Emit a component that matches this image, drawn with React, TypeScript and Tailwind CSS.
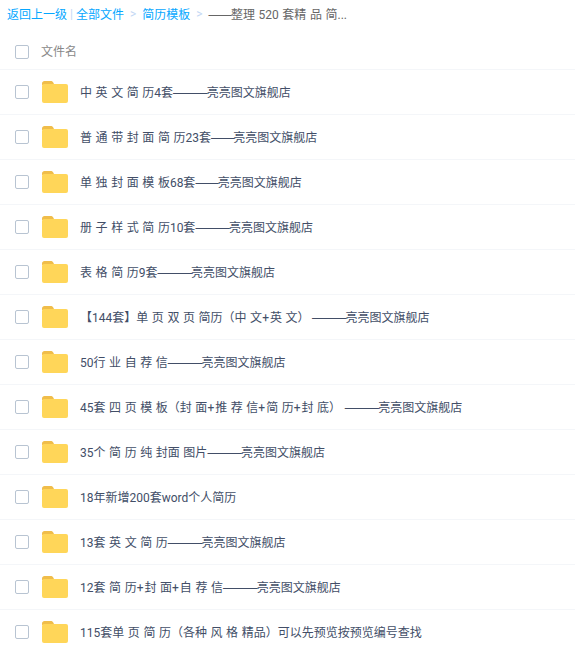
const rows = [
  "中 英 文 简 历4套———亮亮图文旗舰店",
  "普 通 带 封 面 简 历23套——亮亮图文旗舰店",
  "单 独 封 面 模 板68套——亮亮图文旗舰店",
  "册 子 样 式 简 历10套———亮亮图文旗舰店",
  "表 格 简 历9套———亮亮图文旗舰店",
  "【144套】单 页 双 页 简历（中 文+英 文）\u2009———亮亮图文旗舰店",
  "50行 业 自 荐 信———亮亮图文旗舰店",
  "45套 四 页 模 板（封 面+推 荐 信+简 历+封 底） ———亮亮图文旗舰店",
  "35个 简 历 纯 封面 图片———亮亮图文旗舰店",
  "18年新增200套word个人简历",
  "13套 英 文 简 历———亮亮图文旗舰店",
  "12套 简 历+封 面+自 荐 信———亮亮图文旗舰店",
  "115套单 页 简 历（各种 风 格 精品）可以先预览按预览编号查找",
];

function FolderIcon() {
  return (
    <svg width="26" height="22" viewBox="0 0 26 22" className="shrink-0">
      <path d="M0 2.5C0 1.1 1.1 0 2.5 0h6.2c1 0 1.9.5 2.4 1.3L12.5 4H0z" fill="#f0bd4a" />
      <rect x="0" y="3" width="26" height="19" rx="2" fill="#ffd659" />
    </svg>
  );
}

function Checkbox() {
  return <div className="w-[14px] h-[14px] shrink-0 rounded-[2px] border border-[#b8c4d2] bg-white" />;
}

// dashes run together in the original, so they get a font whose em dash has no side gaps
function Dashes({ text }: { text: string }) {
  return <span className="font-['Liberation_Sans',sans-serif] tracking-[-0.8px]">{text}</span>;
}

function FileName({ name }: { name: string }) {
  const parts = name.split(/(—+|\+)/);
  return (
    <span className="pt-[1px] text-[#424e67] whitespace-pre [word-spacing:0.6px]">
      {parts.map((part, i) => {
        if (part.startsWith("—")) return <Dashes key={i} text={part} />;
        if (part === "+") return <span key={i} className="tracking-[1px]">+</span>;
        return part;
      })}
    </span>
  );
}

export default function App() {
  return (
    <div className="w-[575px] h-[653px] overflow-hidden bg-white text-[12px] font-['Roboto','Noto_Sans_CJK_SC',sans-serif]">
      <div className="h-[28px] pl-[7px] flex items-center whitespace-nowrap text-[#666]">
        <span className="pt-[1px] text-[#06a7ff]">返回上一级</span>
        <span className="mx-[3px] text-[#c4d8f4]">|</span>
        <span className="pt-[1px] text-[#06a7ff]">全部文件</span>
        <span className="mx-[6px] text-[#c4d8f4]">&gt;</span>
        <span className="pt-[1px] text-[#06a7ff]">简历模板</span>
        <span className="mx-[6px] text-[#c4d8f4]">&gt;</span>
        <span className="pt-[1px] [word-spacing:0.6px]">
          <Dashes text="——" />
          整理 520 套精 品 简...
        </span>
      </div>
      <div className="h-[42px] pl-[15px] pt-[7px] flex items-center border-b border-[#f4f6f9]">
        <Checkbox />
        <span className="ml-[12px] text-[#888]">文件名</span>
      </div>
      {rows.map((name) => (
        <div key={name} className="h-[45px] pl-[15px] flex items-center border-b border-[#f4f6f9]">
          <Checkbox />
          <div className="ml-[13px] mr-[12px] flex">
            <FolderIcon />
          </div>
          <FileName name={name} />
        </div>
      ))}
    </div>
  );
}
